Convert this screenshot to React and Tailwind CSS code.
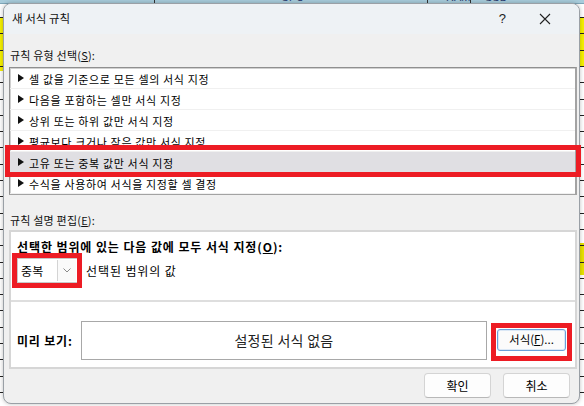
import React from "react";

const rows = [
  "셀 값을 기준으로 모든 셀의 서식 지정",
  "다음을 포함하는 셀만 서식 지정",
  "상위 또는 하위 값만 서식 지정",
  "평균보다 크거나 작은 값만 서식 지정",
  "고유 또는 중복 값만 서식 지정",
  "수식을 사용하여 서식을 지정할 셀 결정",
];

function Tri() {
  return (
    <svg width="6" height="8" viewBox="0 0 6 8" className="shrink-0">
      <path d="M0 0 L6 4 L0 8 Z" fill="#111" />
    </svg>
  );
}

function SheetBg() {
  const lines = [];
  for (let i = 0; i < 26; i++) lines.push(i);
  return (
    <div className="absolute inset-0 bg-white">
      <div className="absolute left-0 right-0 top-0 h-[4px] bg-[#a8ccdb] border-b border-[#7fa6b8]" />
      <div className="absolute top-0 left-[154px] w-px h-[4px] bg-[#333]" />
      <div className="absolute top-0 left-[427px] w-px h-[4px] bg-[#333]" />
      <div className="absolute top-0 left-[470px] w-px h-[4px] bg-[#333]" />
      <div className="absolute top-[-9px] left-[281px] text-[11px] leading-[12px] text-[#2b3f70] font-['Liberation_Sans',sans-serif]">CPU</div>
      <div className="absolute top-[-9px] left-[446px] text-[11px] leading-[12px] text-[#2b3f70] font-['Liberation_Sans',sans-serif]">RAM</div>
      <div className="absolute top-[-9px] left-[485px] text-[11px] leading-[12px] text-[#2b3f70] font-['Liberation_Sans',sans-serif]">SSD</div>
      <div className="absolute left-0 top-[17px] w-[4px] h-[54px] bg-[#f5f000]" />
      <div className="absolute right-0 top-[18px] w-[5px] h-[48px] bg-[#f5f000]" />
      <div className="absolute right-0 top-[243px] w-[5px] h-[32px] bg-[#e8e200]" />
      {lines.map((i) => (
        <div key={i} className="absolute left-0 right-0 h-px bg-[#222]" style={{ top: 17 + i * 16.3 }} />
      ))}
    </div>
  );
}

export default function App() {
  return (
    <div className="relative w-[584px] h-[406px] overflow-hidden font-['Noto_Sans_CJK_KR',sans-serif] text-[11px] text-black">
      <SheetBg />
      <div className="absolute left-[3px] top-[3px] w-[577px] h-[401px] rounded-[8px] border border-[#9aa0a6] bg-[#f0f0f0] overflow-hidden flex flex-col shadow-[0_0_4px_rgba(0,0,0,0.25)]">
        {/* title bar */}
        <div className="h-[30px] shrink-0 bg-[#eef2f5] flex items-center pl-[8px]">
          <span className="text-[11.5px] text-[#111]">새 서식 규칙</span>
          <span className="ml-auto text-[13px] text-[#222] font-['Liberation_Sans',sans-serif] mr-[33px]">?</span>
          <svg width="12" height="12" viewBox="0 0 12 12" className="mr-[28px]">
            <path d="M1 1 L11 11 M11 1 L1 11" stroke="#222" strokeWidth="1.1" />
          </svg>
        </div>
        {/* body */}
        <div className="flex flex-col pl-[5px] pr-[2px]">
          <div className="h-[16px] mt-[13px] leading-[16px] pl-[1px] text-[#111] tracking-[0.2px]">
            규칙 유형 선택(<span className="underline">S</span>):
          </div>
          <div className="mt-[4px] h-[128px] border border-[#8f8f8f] border-r-2 border-b-2 border-r-[#a3a3a3] border-b-[#a3a3a3] bg-white shadow-[inset_1px_1px_0_#d0d0d0]">
            {rows.map((r, i) => (
              <div
                key={i}
                className={
                  "h-[21px] flex items-center gap-[5px] pl-[8px] border-b border-[#f0f0f0] " +
                  (i === 4 ? "bg-[#e0dfe3]" : "")
                }
              >
                <Tri />
                <span className="leading-[16px] mt-[2px] tracking-[0.65px]">{r}</span>
              </div>
            ))}
          </div>
          <div className="h-[16px] mt-[17px] leading-[16px] pl-[1px] text-[#111] tracking-[0.2px]">
            규칙 설명 편집(<span className="underline">E</span>):
          </div>
          <div className="mt-[2px] h-[139px] border-2 border-[#d6d6d6] bg-white flex flex-col">
            <div className="h-[70px] border-b-2 border-[#dedede] pl-[6px] flex flex-col">
              <div className="mt-[7px] h-[16px] leading-[16px] font-bold text-[12px] tracking-[0.9px]">
                선택한 범위에 있는 다음 값에 모두 서식 지정(<span className="underline">O</span>):
              </div>
              <div className="mt-[3px] flex items-center">
                <div className="w-[61px] h-[25px] border border-[#c8c8c8] bg-white flex items-center">
                  <span className="pl-[3px] flex-1 text-[12px] tracking-[0.3px]">중복</span>
                  <div className="w-[19px] h-[21px] border-l border-[#d4d4d4] flex items-center justify-center bg-[#fafafa] mr-[1px]">
                    <svg width="8" height="5" viewBox="0 0 8 5">
                      <path d="M0.5 0.5 L4 4 L7.5 0.5" fill="none" stroke="#8a8a8a" strokeWidth="1" />
                    </svg>
                  </div>
                </div>
                <span className="ml-[8px] text-[12px] tracking-[0.9px]">선택된 범위의 값</span>
              </div>
            </div>
            <div className="flex-1 flex items-start pl-[6px]">
              <div className="mt-[31px] w-[64px] font-bold leading-[16px] text-[12px] tracking-[0.8px]">미리 보기:</div>
              <div className="mt-[19px] w-[406px] h-[39px] border border-[#a8a8a8] flex items-center justify-center text-[14px] text-[#222] tracking-[0.3px]">
                설정된 서식 없음
              </div>
              <div className="mt-[27px] ml-[10px] w-[69px] h-[22px] rounded-[3px] border border-[#6aa0d8] bg-[#fbfbfb] shadow-[inset_0_0_0_1px_#dbe8f6] flex items-center justify-center text-[11.5px]">
                서식(<span className="underline">F</span>)...
              </div>
            </div>
          </div>
          <div className="mt-[4px] flex justify-end gap-[12px] pr-[7px]">
            <div className="w-[67px] h-[25px] rounded-[4px] border border-[#d4d4d4] border-b-[#b8b8b8] bg-[#fdfdfd] flex items-center justify-center text-[12px]">
              확인
            </div>
            <div className="w-[67px] h-[25px] rounded-[4px] border border-[#d4d4d4] border-b-[#b8b8b8] bg-[#fdfdfd] flex items-center justify-center text-[12px]">
              취소
            </div>
          </div>
        </div>
      </div>
      <div className="absolute left-[5px] top-[145px] w-[576px] h-[32px] border-[5px] border-[#ed1c24]" />
      <div className="absolute left-[12px] top-[253px] w-[70px] h-[35px] border-[5px] border-[#ed1c24]" />
      <div className="absolute left-[491px] top-[323px] w-[81px] h-[38px] border-[5px] border-[#ed1c24]" />
    </div>
  );
}
